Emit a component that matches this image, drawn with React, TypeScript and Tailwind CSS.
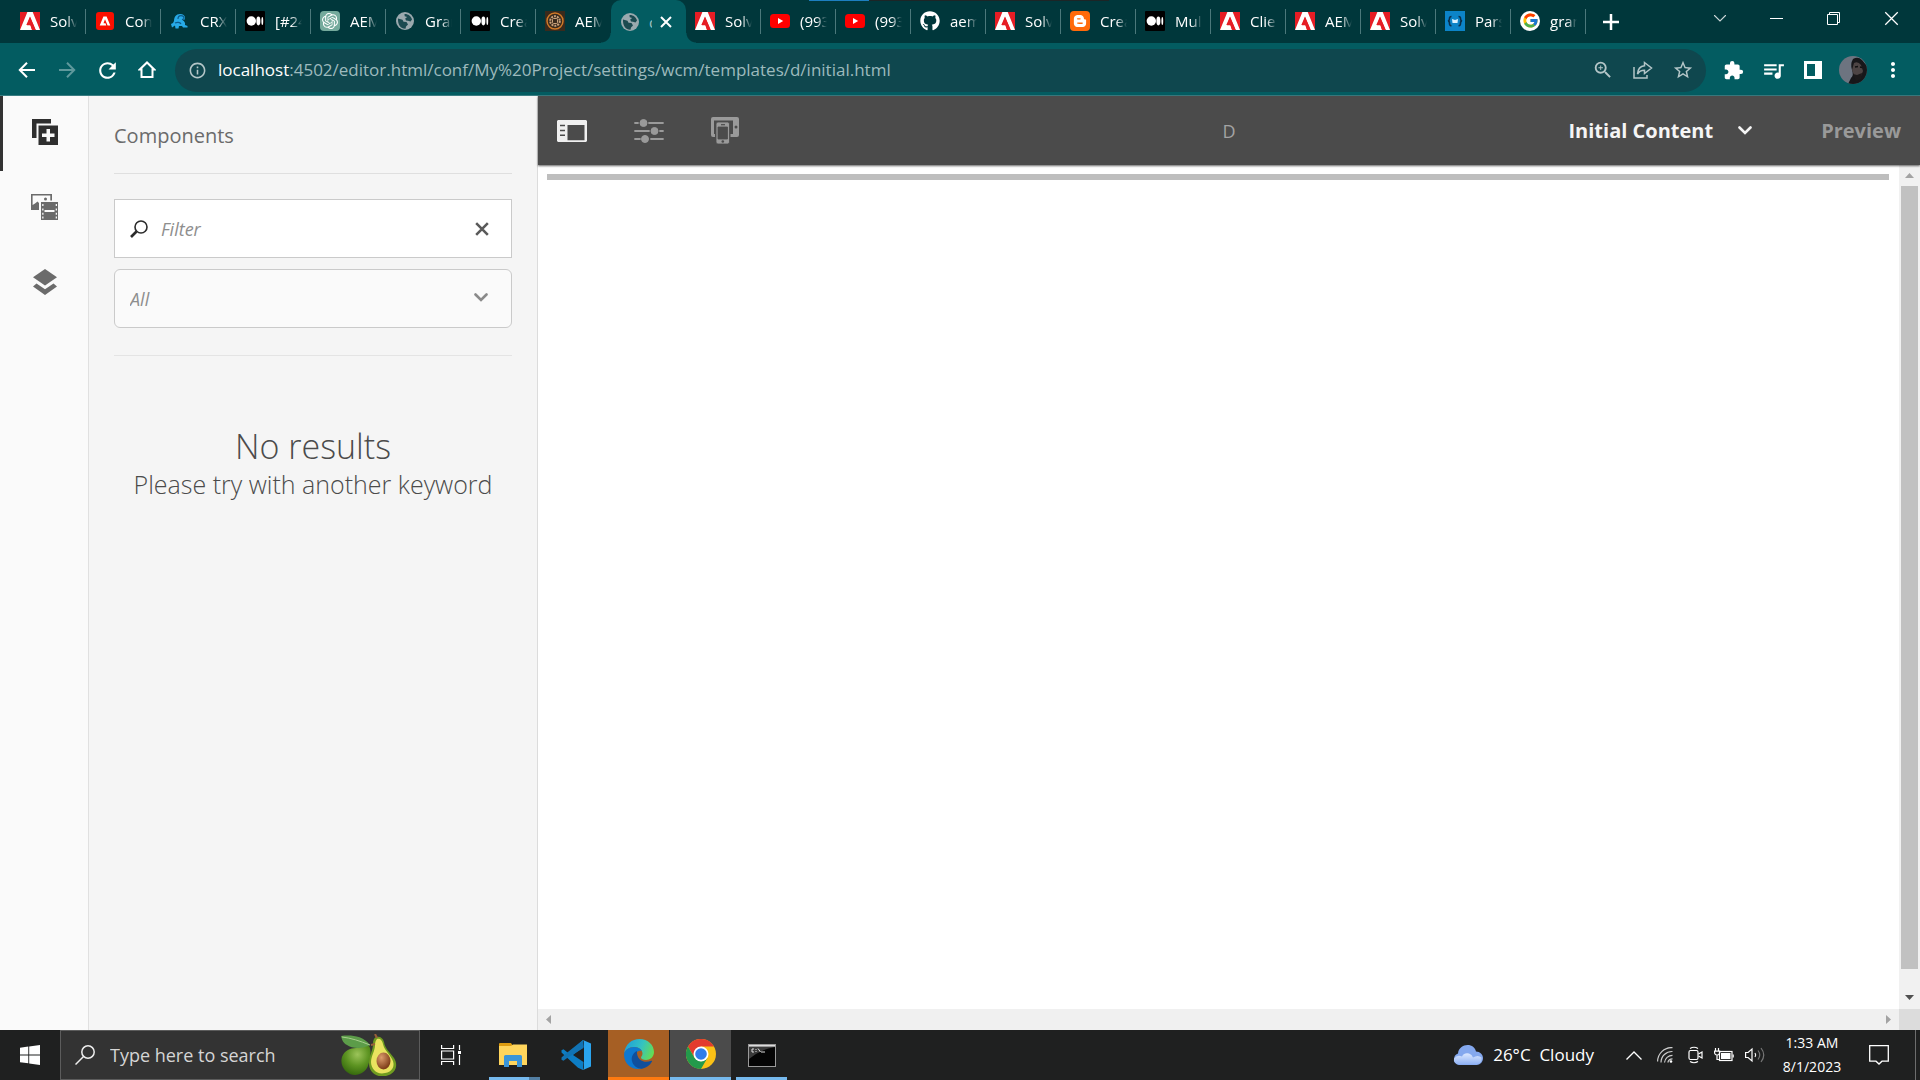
import React, { useState } from 'react';
import { FaBloggerB, FaGithub } from 'react-icons/fa';
import { FcGoogle } from 'react-icons/fc';
import { MdExtension, MdMoreVert, MdOutlineInfo, MdQueueMusic, MdRefresh, MdStarBorder, MdZoomIn } from 'react-icons/md';
import { SiOpenai } from 'react-icons/si';

type IconName = 'adobe' | 'adobeRound' | 'crx' | 'medium' | 'openai' | 'globe' | 'aem' | 'youtube' | 'github' | 'blogger' | 'parse' | 'google';

interface Tab {
    icon: IconName;
    title: string;
    active?: boolean;
}

const tabs: Tab[] = [
    { icon: 'adobe', title: 'Solv' },
    { icon: 'adobeRound', title: 'Con' },
    { icon: 'crx', title: 'CRX' },
    { icon: 'medium', title: '[#24' },
    { icon: 'openai', title: 'AEM' },
    { icon: 'globe', title: 'Gran' },
    { icon: 'medium', title: 'Crea' },
    { icon: 'aem', title: 'AEM' },
    { icon: 'globe', title: 'd', active: true },
    { icon: 'adobe', title: 'Solv' },
    { icon: 'youtube', title: '(993' },
    { icon: 'youtube', title: '(993' },
    { icon: 'github', title: 'aem' },
    { icon: 'adobe', title: 'Solv' },
    { icon: 'blogger', title: 'Crea' },
    { icon: 'medium', title: 'Mul' },
    { icon: 'adobe', title: 'Clie' },
    { icon: 'adobe', title: 'AEM' },
    { icon: 'adobe', title: 'Solv' },
    { icon: 'parse', title: 'Pars' },
    { icon: 'google', title: 'gran' },
];

const Favicon: React.FC<{ name: IconName }> = ({ name }) => {
    switch (name) {
        case 'adobe':
            return (
                <svg viewBox="0 0 20 18" className="w-5 h-[18px] shrink-0">
                    <rect width="20" height="18" fill="#e61d25" />
                    <path d="M7.4 0h5.3L20 18h-4.2L10 4.4 6.3 13h4L12 18H0z" fill="#fff" />
                    <path d="M10 5l5.6 13h-3.5l-1.6-4.8H7z" fill="#e61d25" />
                </svg>
            );
        case 'adobeRound':
            return (
                <svg viewBox="0 0 18 18" className="w-[18px] h-[18px] shrink-0">
                    <rect width="18" height="18" rx="3" fill="#fa0f00" />
                    <path d="M7.4 4.5h3.2l3.7 9h-2.7L9 7.3l-1.5 3.9h2l.8 2.3H3.7z" fill="#fff" />
                </svg>
            );
        case 'crx':
            return (
                <svg viewBox="0 0 18 18" className="w-[18px] h-[18px] shrink-0">
                    <path d="M3 9c0-4 2-7 6-7 3 0 5 1.5 5 4 0 1.5-1 2.2-2.5 2.2C13.5 9 14.5 11 14 13l2.5 1v1.5H12L11 14H8l-.5 2.5h-3L4 13.5 1 15.5 0 12l2-1z" fill="#27aae6" />
                    <path d="M7 7c0-2 1-3.3 3-3.3s3 1 3 2.3-1 1.5-2 1.3M4 11c2-1 5-1 6 1" fill="none" stroke="#0c5c8c" strokeWidth="1.2" />
                </svg>
            );
        case 'medium':
            return (
                <svg viewBox="0 0 20 20" className="w-5 h-5 shrink-0">
                    <rect width="20" height="20" rx="1" fill="#000" />
                    <ellipse cx="6.3" cy="10" rx="4.7" ry="4.7" fill="#fff" />
                    <ellipse cx="13.4" cy="10" rx="2" ry="4.4" fill="#fff" />
                    <ellipse cx="17.3" cy="10" rx="0.9" ry="4" fill="#fff" />
                </svg>
            );
        case 'openai':
            return (
                <span className="flex w-5 h-5 shrink-0 items-center justify-center rounded-sm bg-[#74aa9c] text-white">
                    <SiOpenai size={16} />
                </span>
            );
        case 'globe':
            return (
                <svg viewBox="0 0 18 18" className="w-[18px] h-[18px] shrink-0">
                    <circle cx="9" cy="9" r="9" fill="#9aa9ae" />
                    <path d="M2 6.5l4.5 1.2 1 2 3 .3 1.5 2.5-2 2-.5 2.3C5 17 1.6 13 2 6.500zM8.500 1.900C12 1.700 15 3.800 16 7.500l-1.500 2-2.500-.7-2-.2-.8-2.100 2-1.500-2.500-.8z" fill="#1b4a50" />
                </svg>
            );
        case 'aem':
            return (
                <svg viewBox="0 0 20 20" className="w-5 h-5 shrink-0">
                    <rect width="20" height="20" fill="#3a2a1c" />
                    <circle cx="10" cy="10" r="8" fill="none" stroke="#d07a28" strokeWidth="1.5" />
                    <circle cx="10" cy="10" r="4.8" fill="none" stroke="#c9a27c" strokeWidth="2" strokeDasharray="2 1" />
                    <rect x="7.5" y="7.5" width="5" height="5" rx="1" fill="none" stroke="#c9a27c" />
                </svg>
            );
        case 'youtube':
            return (
                <svg viewBox="0 0 20 14" className="w-5 h-[14px] shrink-0">
                    <rect width="20" height="14" rx="3.5" fill="#f00" />
                    <path d="M8 4l5.2 3L8 10z" fill="#fff" />
                </svg>
            );
        case 'github':
            return <FaGithub size={20} className="shrink-0 text-white" />;
        case 'blogger':
            return (
                <span className="flex w-5 h-5 shrink-0 items-center justify-center rounded-sm bg-[#ff6a0a] text-white">
                    <FaBloggerB size={14} />
                </span>
            );
        case 'parse':
            return (
                <svg viewBox="0 0 20 20" className="w-5 h-5 shrink-0">
                    <rect width="20" height="20" fill="#0c84c8" />
                    <path d="M6.5 5.500Q4.500 5.500 4.500 7.500T3 10q1.500 0 1.500 2.500T6.500 14.500M13.500 5.500q2 0 2 2T17 10q-1.500 0-1.500 2.500t-2 2" fill="none" stroke="#0a2f4a" strokeWidth="1.6" />
                    <path d="M7 8l3 1 3-1-.5 4h-5z" fill="#d9f1ff" />
                </svg>
            );
        default:
            return (
                <span className="flex w-5 h-5 shrink-0 items-center justify-center rounded-full bg-white">
                    <FcGoogle size={17} />
                </span>
            );
    }
};

const CloseGlyph: React.FC<{ className?: string; width?: number }> = ({ className, width = 2 }) => (
    <svg viewBox="0 0 12 12" className={className} fill="none" stroke="currentColor" strokeWidth={width}>
        <path d="M1 1l10 10M11 1L1 11" />
    </svg>
);

const Chevron: React.FC<{ className?: string; width?: number }> = ({ className, width = 2.6 }) => (
    <svg viewBox="0 0 14 9" className={className} fill="none" stroke="currentColor" strokeWidth={width} strokeLinecap="round">
        <path d="M1.5 1.5L7 7l5.5-5.5" />
    </svg>
);

const TabStrip: React.FC = () => (
    <div className="relative flex h-[43px] bg-[#00373b] pl-[11px]">
        <div className="absolute top-0 left-[809px] h-px w-[60px] bg-[#1d7fc0]" />
        <div className="absolute top-0 left-[869px] h-px w-60 bg-[#1c2526]" />
        <div role="tablist" className="flex min-w-0">
            {tabs.map((tab, i) =>
                tab.active ? (
                    <div key={i} role="tab" aria-selected="true" className="relative flex w-[75px] items-center rounded-t-[10px] bg-[#035c61] pl-[10px]">
                        <span className="absolute bottom-0 -left-[10px] w-[10px] h-[10px] bg-[radial-gradient(circle_at_0_0,transparent_9px,#035c61_10px)]" />
                        <span className="absolute bottom-0 -right-[10px] w-[10px] h-[10px] bg-[radial-gradient(circle_at_100%_0,transparent_9px,#035c61_10px)]" />
                        <Favicon name={tab.icon} />
                        <span className="ml-[10px] w-[3px] overflow-hidden text-[15px] leading-5 text-white/60">{tab.title}</span>
                        <button aria-label="Close tab" className="ml-2 text-white">
                            <CloseGlyph className="w-3 h-3" />
                        </button>
                    </div>
                ) : (
                    <button key={i} role="tab" className="relative flex w-[75px] items-center pb-[2px] pl-[9px] text-white">
                        <span className="flex w-5 shrink-0 justify-center">
                            <Favicon name={tab.icon} />
                        </span>
                        <span className="ml-[10px] w-[27px] overflow-hidden whitespace-nowrap text-left text-[15px] leading-5 [mask-image:linear-gradient(to_right,black_60%,transparent)]">
                            {tab.title}
                        </span>
                        {!tabs[i + 1]?.active && <span className="absolute right-0 top-[9px] h-[25px] w-px bg-[#4b787b]" />}
                    </button>
                )
            )}
        </div>
        <button aria-label="New tab" className="flex w-[50px] items-center justify-center text-white">
            <svg viewBox="0 0 16 16" className="w-4 h-4" stroke="currentColor" strokeWidth="2.5">
                <path d="M8 0v16M0 8h16" />
            </svg>
        </button>
        <div className="ml-auto flex pb-[6px] text-white">
            <button aria-label="Search tabs" className="flex w-[57px] items-center justify-center text-white/80">
                <Chevron className="w-[14px] h-[9px]" width={1.1} />
            </button>
            <button aria-label="Minimize" className="flex w-[57px] items-center justify-center">
                <span className="h-px w-[13px] bg-white" />
            </button>
            <button aria-label="Restore" className="flex w-[57px] items-center justify-center">
                <svg viewBox="0 0 13 13" className="w-[13px] h-[13px]" fill="none" stroke="currentColor">
                    <path d="M.5 2.5h10v10H.5zM2.5 2.5v-2h10v10h-2" />
                </svg>
            </button>
            <button aria-label="Close" className="flex w-[58px] items-center justify-center">
                <CloseGlyph className="w-[15px] h-[15px]" width={1} />
            </button>
        </div>
    </div>
);

const AddressBar: React.FC = () => {
    const iconButton = 'flex w-10 h-10 shrink-0 items-center justify-center';

    return (
        <div className="flex h-[53px] items-center border-b border-[#3a7d82] bg-[#035c61] pt-[2px] pl-[7px] pr-[7px] text-white">
            <button aria-label="Back" className={iconButton}>
                <svg viewBox="0 0 18 16" className="w-[18px] h-4" fill="none" stroke="currentColor" strokeWidth="2">
                    <path d="M17 8H2M9 .8L1.8 8 9 15.2" />
                </svg>
            </button>
            <button aria-label="Forward" className={`${iconButton} text-[#5f999c]`}>
                <svg viewBox="0 0 18 16" className="w-[18px] h-4" fill="none" stroke="currentColor" strokeWidth="2">
                    <path d="M1 8h15M9 .8L16.2 8 9 15.2" />
                </svg>
            </button>
            <button aria-label="Reload" className={iconButton}>
                <MdRefresh size={25} />
            </button>
            <button aria-label="Home" className={iconButton}>
                <svg viewBox="0 0 18 18" className="w-[18px] h-[18px]" fill="none" stroke="currentColor" strokeWidth="2">
                    <path d="M3.5 8.500H1.800L9 1.500l7.200 7H14.500V16h-11z" />
                </svg>
            </button>
            <div className="ml-2 flex h-[43px] min-w-0 flex-1 items-center rounded-full bg-[#0f474e] pl-[13px] pr-[3px] text-[#b4c6c8]">
                <MdOutlineInfo size={19} className="shrink-0" />
                <p className="ml-[11px] flex-1 truncate text-[17px] leading-6 text-[#9dbabd]">
                    <span className="text-white">localhost</span>:4502/editor.html/conf/My%20Project/settings/wcm/templates/d/initial.html
                </p>
                <button aria-label="Zoom" className={iconButton}>
                    <MdZoomIn size={22} />
                </button>
                <button aria-label="Share" className={iconButton}>
                    <svg viewBox="0 0 20 18" className="w-5 h-[18px]" fill="none" stroke="currentColor" strokeWidth="1.5">
                        <path d="M1 6v11h13v-3M11.5 1.500L18.500 7l-7 5.500V9.300C8.500 9.300 6 10.500 4.500 13c.3-4.500 3-7.800 7-8.200z" />
                    </svg>
                </button>
                <button aria-label="Bookmark" className={iconButton}>
                    <MdStarBorder size={22} />
                </button>
            </div>
            <div className="ml-[7px] flex items-center">
                <button aria-label="Extensions" className={iconButton}>
                    <MdExtension size={21} />
                </button>
                <button aria-label="Media" className={iconButton}>
                    <MdQueueMusic size={25} />
                </button>
                <button aria-label="Side panel" className={iconButton}>
                    <svg viewBox="0 0 18 18" className="w-[18px] h-[18px]">
                        <path d="M0 0h18v18H0zM3 3v12h8V3z" fill="currentColor" fillRule="evenodd" />
                    </svg>
                </button>
                <button aria-label="Profile" className={iconButton}>
                    <svg viewBox="0 0 28 28" className="w-7 h-7 overflow-hidden rounded-full">
                        <rect width="28" height="28" fill="#6d7480" />
                        <path d="M14 3q5-3 9 1l5 6v18H9l3-6q3-3 1-8-2-6 1-11z" fill="#17171a" />
                        <path d="M15 7q4-2 7 2l2 6-2 5-4 2-3-3-2-5z" fill="#4d4444" />
                        <path d="M14 18l4 1 5-2-1 6-5 2z" fill="#1c191a" />
                        <path d="M16 11l3-.5M21 11l2 .5" stroke="#111" strokeWidth="1.5" />
                    </svg>
                </button>
                <button aria-label="Menu" className={iconButton}>
                    <MdMoreVert size={24} />
                </button>
            </div>
        </div>
    );
};

const SideRail: React.FC = () => (
    <nav className="flex w-[89px] shrink-0 flex-col border-r border-[#e0e0e0] bg-[#fafafa]">
        <button aria-label="Components" className="flex h-[75px] items-center justify-center border-l-[3px] border-[#323232] pr-[2px] pb-[3px] text-[#2f2f2f]">
            <svg viewBox="0 0 26 26" className="w-[26px] h-[26px]" fill="currentColor">
                <path d="M0 0h19v4.5H4.500V19H0z" />
                <path d="M6.500 6.500H26V26H6.500zM14.500 10v4.500H10v3.500h4.500v4.500H18V18h4.500v-3.500H18V10z" fillRule="evenodd" />
            </svg>
        </button>
        <button aria-label="Assets" className="flex h-[75px] items-center justify-center border-l-[3px] border-transparent pr-[2px] pb-[3px] text-[#6b6b6b]">
            <svg viewBox="0 0 27 26" className="w-[27px] h-[26px]" fill="currentColor">
                <path d="M0 0h21v6.500h-1.700v-5H1.600V11L4 9.500 6.500 7.500 8 9v7H0z" />
                <circle cx="14.5" cy="5" r="1.5" />
                <path d="M10 8h17v18H10zM13.500 16v2h10v-2zM11.200 10v2h1.300v-2zm0 4.500v2h1.300v-2zm0 4.300v2h1.300v-2zm0 3.700v2h1.300v-2zM24.700 10v2H26v-2zm0 4.500v2H26v-2zm0 4.300v2H26v-2zm0 3.700v2H26v-2z" fillRule="evenodd" />
            </svg>
        </button>
        <button aria-label="Content tree" className="flex h-[75px] items-center justify-center border-l-[3px] border-transparent pr-[2px] pb-[3px] text-[#6b6b6b]">
            <svg viewBox="0 0 24 26" className="w-6 h-[26px]" fill="currentColor">
                <path d="M12 0l12 8.200-12 8.300L0 8.200z" />
                <path d="M3.500 14.500L12 20.300l8.500-5.800L24 17.500 12 26 0 17.500z" />
            </svg>
        </button>
    </nav>
);

const ComponentsPanel: React.FC = () => {
    const [filter, setFilter] = useState('');

    return (
        <aside className="w-[449px] shrink-0 border-r border-[#dcdcdc] bg-[#f5f5f5] px-[25px]">
            <h1 className="flex h-[78px] items-center border-b border-[#dfdfdf] pt-[2px] text-xl text-[#6b6b6b]">Components</h1>
            <div className="space-y-[11px] border-b border-[#e4e4e4] pt-[25px] pb-[27px]">
                <div className="flex h-[59px] items-center border border-[#cacaca] bg-white pl-[15px] pr-[22px]">
                    <svg viewBox="0 0 18 18" className="w-[18px] h-[18px] shrink-0 text-[#2b2b2b]" fill="none" stroke="currentColor">
                        <circle cx="11" cy="7" r="6" strokeWidth="1.6" />
                        <path d="M6.500 11.500L1 17" strokeWidth="2.6" />
                    </svg>
                    <input
                        aria-label="Filter"
                        placeholder="Filter"
                        value={filter}
                        onChange={e => setFilter(e.target.value)}
                        className="ml-[13px] min-w-0 flex-1 text-lg italic text-[#4b4b4b] outline-none placeholder:text-[#8e8e8e]"
                    />
                    <button aria-label="Clear filter" onClick={() => setFilter('')} className="text-[#5a5a5a]">
                        <CloseGlyph className="w-[14px] h-[14px]" width={2.2} />
                    </button>
                </div>
                <div className="relative">
                    <select aria-label="Group" className="block h-[59px] w-full appearance-none rounded-md border border-[#cacaca] bg-[#fafafa] pl-[15px] text-lg italic text-[#8e8e8e]">
                        <option>All</option>
                    </select>
                    <Chevron className="pointer-events-none absolute right-6 top-6 w-[14px] h-[9px] text-[#8a8a8a]" />
                </div>
            </div>
            <div className="pt-[67px] text-center font-light text-[#4b4b4b]">
                <h2 className="text-[34px] leading-[46px]">No results</h2>
                <p className="text-[25px] leading-[30px]">Please try with another keyword</p>
            </div>
        </aside>
    );
};

const EditorHeader: React.FC = () => (
    <header className="relative z-10 grid h-[69px] grid-cols-[1fr_auto_1fr] items-center bg-[#4b4b4b] pl-[19px] pr-[19px] shadow-[0_1px_2px_rgba(0,0,0,0.6)]">
        <div className="flex items-center gap-[47px]">
            <button aria-label="Toggle side panel" className="text-[#f0f0f0]">
                <svg viewBox="0 0 30 22" className="w-[30px] h-[22px]" fill="currentColor">
                    <path d="M1 0h28l1 1v20l-1 1H1l-1-1V1zM10.500 5v15.300h17V5z" fillRule="evenodd" />
                    <path d="M3 5.500h5M3 10.500h5M3 15.200h5" stroke="#4b4b4b" strokeWidth="1.5" />
                </svg>
            </button>
            <button aria-label="Page information" className="text-[#9a9a9a]">
                <svg viewBox="0 0 30 24" className="w-[30px] h-6" fill="currentColor" stroke="currentColor">
                    <path d="M1 4h3M15 4h14M1 12h14M26 12h3M1 20h5M17 20h12" strokeWidth="1.8" strokeLinecap="round" />
                    <circle cx="9.5" cy="4" r="3.5" />
                    <circle cx="20.5" cy="12" r="3.5" />
                    <circle cx="11" cy="20" r="3.5" />
                </svg>
            </button>
            <button aria-label="Emulator" className="text-[#9a9a9a]">
                <svg viewBox="0 0 28 27" className="w-7 h-[27px]" fill="currentColor">
                    <path d="M2 0h24q2 0 2 2v16q0 2-2 2h-6.500v-3H22V3.500H3V17h1v3H2q-2 0-2-2V2q0-2 2-2z" />
                    <circle cx="25" cy="10" r="1.5" fill="#4b4b4b" />
                    <path d="M7 5h9.500q2 0 2 2v18q0 2-2 2H7q-2 0-2-2V7q0-2 2-2zm0 5v12h9.500V10z" fillRule="evenodd" stroke="#4b4b4b" strokeWidth="0.8" />
                    <path d="M10 7.700h4" stroke="#4b4b4b" strokeWidth="1.2" />
                    <circle cx="11.8" cy="24.500" r="1.3" fill="#4b4b4b" />
                </svg>
            </button>
        </div>
        <span className="text-lg text-[#a3a3a3]">D</span>
        <div className="flex items-center justify-end text-xl font-bold">
            <button className="flex items-center gap-[25px] text-[#f5f5f5]">
                Initial Content
                <Chevron className="w-[14px] h-[9px]" />
            </button>
            <button className="ml-[69px] text-[#999]">Preview</button>
        </div>
    </header>
);

const Canvas: React.FC = () => (
    <div className="grid flex-1 grid-cols-[1fr_21px] grid-rows-[1fr_21px] bg-white">
        <div className="pl-[9px] pr-[10px] pt-[9px]">
            <div className="h-[6px] bg-[#bebebe]" />
        </div>
        <div className="flex flex-col items-center bg-[#f1f1f1]">
            <svg viewBox="0 0 9 5" className="my-2 w-[9px] h-[5px]">
                <path d="M0 5l4.500-5L9 5z" fill="#a3a3a3" />
            </svg>
            <div className="mb-10 w-[17px] flex-1 bg-[#c1c1c1]" />
            <svg viewBox="0 0 9 5" className="-mt-[14px] mb-[9px] w-[9px] h-[5px]">
                <path d="M0 0h9L4.500 5z" fill="#505050" />
            </svg>
        </div>
        <div className="flex items-center justify-between bg-[#f0f0f0] px-2">
            <svg viewBox="0 0 5 9" className="w-[5px] h-[9px]">
                <path d="M5 0v9L0 4.500z" fill="#a3a3a3" />
            </svg>
            <svg viewBox="0 0 5 9" className="w-[5px] h-[9px]">
                <path d="M0 0v9l5-4.500z" fill="#a3a3a3" />
            </svg>
        </div>
        <div className="bg-[#dcdcdc]" />
    </div>
);

const Taskbar: React.FC = () => (
    <footer className="flex h-[50px] shrink-0 bg-[#1f2020] text-white">
        <button aria-label="Start" className="flex w-[60px] items-center justify-center">
            <svg viewBox="0 0 20 20" className="w-5 h-5" fill="currentColor">
                <path d="M0 2.800L8.300 1.600v7.900H0zM9.200 1.500L20 0v9.500H9.200zM0 10.400h8.300v7.900L0 17.200zM9.200 10.400H20V20L9.200 18.500z" />
            </svg>
        </button>
        <label className="flex w-[360px] items-center border border-[#5c5c5c] bg-[#333] pl-[14px] pr-[22px]">
            <svg viewBox="0 0 20 20" className="w-5 h-5 shrink-0" fill="none" stroke="#eee" strokeWidth="1.5">
                <circle cx="13" cy="7" r="6.2" />
                <path d="M8.500 11.500L.5 19.500" />
            </svg>
            <input aria-label="Search" placeholder="Type here to search" className="ml-[15px] min-w-0 flex-1 text-lg outline-none placeholder:text-[#d5d5d5]" />
            <svg viewBox="0 0 56 42" className="w-14 h-[42px] shrink-0">
                <defs>
                    <radialGradient id="fruit" cx="0.55" cy="0.3" r="0.7">
                        <stop offset="0" stopColor="#9cc45a" />
                        <stop offset="0.55" stopColor="#5d9422" />
                        <stop offset="1" stopColor="#376b0e" />
                    </radialGradient>
                    <radialGradient id="pit" cx="0.35" cy="0.3" r="0.7">
                        <stop offset="0" stopColor="#dc9c6c" />
                        <stop offset="1" stopColor="#7d3c18" />
                    </radialGradient>
                </defs>
                <path d="M28 12c3 4 1 14-1 20-3 7-11 11-18 8S-1 29 1 23s8-9 14-9c6-1 9-3 13-2z" fill="url(#fruit)" />
                <path d="M35 3c4-1 7 1 8 5 1 7 6 10 10 16 5 8 1 16-8 18-10 2-17-4-17-13 0-8 4-12 4-19 0-4 1-6 3-7z" fill="#6f9c20" />
                <path d="M36 5c3-1 5 1 6 5 1 6 6 9 9 15 4 7 0 13-7 14-8 2-14-4-14-11 0-6 4-11 4-17 0-3 1-5 2-6z" fill="#e9e35f" />
                <ellipse cx="42.5" cy="27" rx="7" ry="8.5" fill="url(#pit)" />
                <path d="M0 2c9-1 21-1 29 9-7 4-18 4-23 0-4-2-5-5-6-9z" fill="#5c9c49" />
                <path d="M1 3c9 1 18 4 28 8" fill="none" stroke="#a8cf8d" />
                <path d="M34 0l2 4M30 11l4-1" stroke="#9a6038" strokeWidth="2" />
            </svg>
        </label>
        <button aria-label="Task view" className="flex w-[61px] items-center justify-center">
            <svg viewBox="0 0 20 20" className="w-5 h-5" fill="none" stroke="currentColor" strokeWidth="1.2">
                <path d="M.6 0v3.500h12V0M.6 20v-3.500h12V20M.6 6h12v8H.6zM18.500 0v5M18.500 10v10" />
                <path d="M17 6h3v3h-3z" fill="currentColor" stroke="none" />
            </svg>
        </button>
        <button aria-label="File Explorer" className="relative flex w-16 items-center justify-center">
            <svg viewBox="0 0 28 24" className="w-7 h-6">
                <path d="M0 1q0-1 1-1h11l2 3H0z" fill="#dd9c10" />
                <path d="M0 3h12l2-1.500h14V22H0z" fill="#ffd55c" />
                <path d="M5 24V13.500q0-1.500 1.500-1.500h15q1.500 0 1.500 1.500V24h-5v-6h-8v6z" fill="#3b95d8" />
            </svg>
            <span className="absolute bottom-0 left-2 h-[3px] w-10 bg-[#76b9ed]" />
            <span className="absolute bottom-0 left-12 h-[3px] w-[11px] bg-[#537fa3]" />
        </button>
        <button aria-label="Visual Studio Code" className="flex w-[62px] items-center justify-center">
            <svg viewBox="0 0 30 30" className="w-[30px] h-[30px]">
                <path d="M22 0L7.500 13.200 2.500 9.300.5 10.300v2.200l16.500 15.200L22 30l.5-8L12 15l10.500-8z" fill="#0d7dc4" />
                <path d="M.5 17.500v2.300l2 1 5-3.900L22.500 8 22 0 5 13.500z" fill="#1173b4" />
                <path d="M22 0l8 3.500v23L22 30q1-1 1-3V3q0-2-1-3z" fill="#2aa4ee" />
            </svg>
        </button>
        <button aria-label="Microsoft Edge" className="ml-px flex w-[61px] items-center justify-center border-b-[3px] border-[#ff7a10] bg-[#a65f24]">
            <svg viewBox="0 0 30 30" className="w-[30px] h-[30px]">
                <defs>
                    <linearGradient id="wave" x1="0" y1="0.3" x2="1" y2="0.6">
                        <stop offset="0" stopColor="#1d9fdc" />
                        <stop offset="0.55" stopColor="#35c3c0" />
                        <stop offset="1" stopColor="#66dd52" />
                    </linearGradient>
                </defs>
                <path d="M0 15C1 5 8 0 15.500 0 24 0 30 6 30 13c0 5-4 8-8 8-3 0-5-1-5-2.500 0-1 1.500-1.500 1.500-4C18.500 11 15 8 10 8 5 8 1 11 0 15z" fill="url(#wave)" />
                <path d="M0 15c1-4 5-7 10-7 3.500 0 6.500 1.500 8 4-4-1-7 2-7 6 0 6 5 10 10 10-9 5-21 0-21-13z" fill="#0d78d0" />
                <path d="M13 12c-4 2-6 6-5 10 1 5 6 8 10 7.700 4-.7 8-3.300 10-7.200.3-.6-.3-1-.8-.7-7 3-15-.8-14.200-9.800z" fill="#104f9c" />
            </svg>
        </button>
        <button aria-label="Google Chrome" className="ml-px flex w-[61px] items-center justify-center border-b-[3px] border-[#76b9ed] bg-[#4b4b4b]">
            <svg viewBox="0 0 30 30" className="w-[30px] h-[30px]">
                <circle cx="15" cy="15" r="15" fill="#fbc116" />
                <path d="M15 7.500h13a15 15 0 0 0-26 0l6.500 11z" fill="#e33b2e" />
                <path d="M2 7.500A15 15 0 0 0 15 30l6.500-11.300L15 22.500l-6.500-3.800z" fill="#239a4b" />
                <circle cx="15" cy="15" r="7.5" fill="#fff" />
                <circle cx="15" cy="15" r="5.8" fill="#2f7de9" />
            </svg>
        </button>
        <button aria-label="Command Prompt" className="relative flex w-[61px] items-center justify-center">
            <svg viewBox="0 0 28 23" className="w-7 h-[23px]">
                <rect width="28" height="23" fill="#9a9a9a" />
                <rect x="1" y="3" width="26" height="19" fill="#050505" />
                <path d="M1 3h26q-14 2-26 12z" fill="#3a3a3a" />
                <path d="M1 1.500h26" stroke="#ddd" />
                <path d="M6 5H4v3h2M8 5v1M8 7v1M10 4.500L12.500 8M13 8h4" fill="none" stroke="#ddd" />
            </svg>
            <span className="absolute inset-x-[5px] bottom-0 h-[3px] bg-[#76b9ed]" />
        </button>

        <button className="ml-auto flex items-center gap-[10px] whitespace-pre text-[17px]">
            <svg viewBox="0 0 30 20" className="w-[30px] h-5">
                <defs>
                    <linearGradient id="cloud" x1="0" y1="0" x2="0" y2="1">
                        <stop offset="0" stopColor="#dce8ff" />
                        <stop offset="1" stopColor="#8fb2f4" />
                    </linearGradient>
                </defs>
                <path d="M6 20a6 6 0 0 1-1-11.500C5.500 3 10 0 14.500 0 19 0 22 2.500 23 6.500c4 0 7 3 7 6.500 0 4-3 7-6.500 7z" fill="#84a8ee" />
                <path d="M6 19.500q-6-1-5-6 3-4 8-2 2-4 7-3 3 1 4 4 5-3 8.500 0 1 6-5 7z" fill="url(#cloud)" />
            </svg>
            26°C  Cloudy
        </button>
        <div className="ml-8 flex items-center gap-[15px]">
            <button aria-label="Show hidden icons">
                <svg viewBox="0 0 16 9" className="w-4 h-[9px]" fill="none" stroke="currentColor" strokeWidth="1.3">
                    <path d="M.5 8.500L8 1l7.500 7.500" />
                </svg>
            </button>
            <svg viewBox="0 0 16 16" className="w-4 h-4" fill="none" stroke="#ccc" strokeWidth="1.2">
                <path d="M.6 14.500A14 14 0 0 1 15.500.6M4 15.500A11 11 0 0 1 15.500 4.500M7.500 15.500A8 8 0 0 1 15.500 8.300M10.800 15.500a5 5 0 0 1 4.700-3.700" />
                <circle cx="14" cy="14.500" r="1.3" fill="#fff" stroke="none" />
            </svg>
            <svg viewBox="0 0 15 18" className="w-[15px] h-[18px]" fill="none" stroke="currentColor" strokeWidth="1.2">
                <rect x="1" y="4.500" width="9" height="9" rx="1.5" />
                <path d="M10.500 8l3.500-2v6l-3.500-2M2 2.500Q6 0 10 2.500M2 15.500q4 2.500 8 0" />
            </svg>
            <svg viewBox="0 0 20 14" className="-ml-1 w-5 h-[14px]" fill="none" stroke="currentColor" strokeWidth="1.2">
                <path d="M1.500 0v3M4.500 0v3M.6 3.200h5v2q-.5 2-2.500 2t-2.500-2zM3 7v4.500h2" />
                <rect x="5.5" y="3.500" width="12.5" height="9" />
                <rect x="7" y="5" width="9.5" height="6" fill="currentColor" stroke="none" />
                <path d="M19.200 6.500v3" />
            </svg>
            <svg viewBox="0 0 20 18" className="-ml-1 w-5 h-[18px]" fill="none" stroke="currentColor" strokeWidth="1.2">
                <path d="M.6 6.500h2.500L7 3v12L3.100 11.500H.6z" />
                <path d="M10 7q1.500 2 0 4" />
                <path d="M13 4.500q3.500 4.500 0 9M16 2q5.500 7 0 14" stroke="#777" />
            </svg>
        </div>
        <button className="ml-4 w-[62px] text-center text-sm leading-6">
            1:33 AM
            <br />
            8/1/2023
        </button>
        <button aria-label="Notifications" className="ml-[26px] mr-[26px] flex items-center">
            <svg viewBox="0 0 20 20" className="w-5 h-5" fill="none" stroke="currentColor" strokeWidth="1.3">
                <path d="M.7.7h18.600v15.500H13L10 19l-3-2.800H.7z" />
            </svg>
        </button>
        <div className="w-[5px] border-l border-[#6d6d6d]" />
    </footer>
);

const App: React.FC = () => (
    <div className="flex min-h-screen flex-col bg-white font-['Open_Sans','Noto_Sans',sans-serif]">
        <TabStrip />
        <AddressBar />
        <div className="flex flex-1">
            <SideRail />
            <ComponentsPanel />
            <main className="flex min-w-0 flex-1 flex-col">
                <EditorHeader />
                <Canvas />
            </main>
        </div>
        <Taskbar />
    </div>
);

export default App;
